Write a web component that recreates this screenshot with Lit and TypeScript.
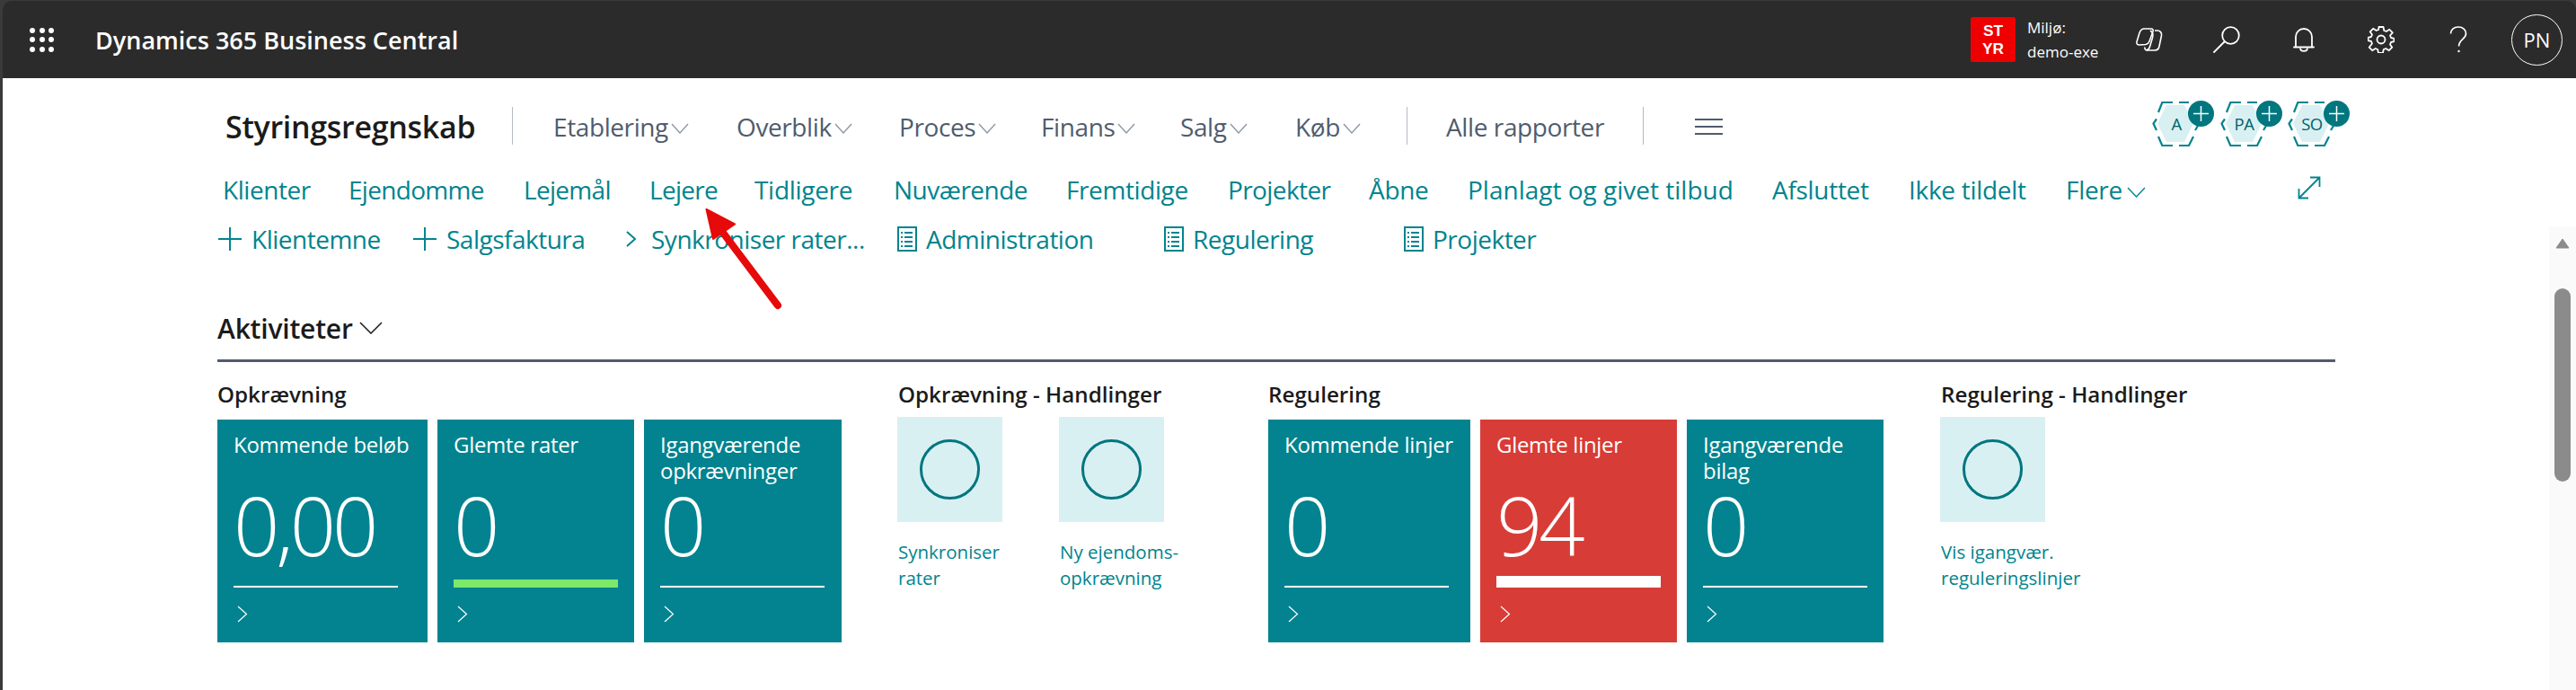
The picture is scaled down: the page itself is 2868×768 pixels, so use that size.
import { LitElement, html, css } from "lit";
import { customElement } from "lit/decorators.js";

const chevDown = (w = 20) => html`<svg class="chev" width=${w} height="12" viewBox="0 0 20 12" preserveAspectRatio="none"><path d="M1 1l9 10 9-10" fill="none" stroke="currentColor" stroke-width="1.3"/></svg>`;

const topNav = [
  { t: "Etablering", w: 204 },
  { t: "Overblik", w: 181 },
  { t: "Proces", w: 158 },
  { t: "Finans", w: 155 },
  { t: "Salg", w: 128 },
  { t: "Køb", w: 124 },
];
const links = [
  { t: "Klienter", w: 140, ls: -0.45 }, { t: "Ejendomme", w: 195, ls: -0.7 }, { t: "Lejemål", w: 140, ls: -0.7 }, { t: "Lejere", w: 117, ls: -0.7 },
  { t: "Tidligere", w: 155, ls: -0.3 }, { t: "Nuværende", w: 192, ls: -0.5 }, { t: "Fremtidige", w: 180, ls: -0.4 }, { t: "Projekter", w: 157, ls: -0.6 },
  { t: "Åbne", w: 110, ls: -0.3 }, { t: "Planlagt og givet tilbud", w: 339, ls: 0 }, { t: "Afsluttet", w: 152, ls: -0.3 }, { t: "Ikke tildelt", w: 175, ls: -0.3 },
];

const plus = html`<svg class="ic" width="28" height="28" viewBox="0 0 28 28"><path d="M14 1v26M1 14h26" fill="none" stroke="currentColor" stroke-width="2"/></svg>`;
const report = html`<svg class="ic" width="22" height="28" viewBox="0 0 22 28" fill="none" stroke="currentColor" stroke-width="2"><path d="M1 1h20v26H1z"/><path d="M8 7h9M8 12h9M8 17h9M8 22h9M4 7h2M4 12h2M4 17h2M4 22h2"/></svg>`;

type Tile = { label: string; value: string; w: number; bar?: "green" | "white"; red?: boolean };
const tile = (x: Tile) => html`
  <div class="tile ${x.red ? "red" : ""}" style="width:${x.w}px">
    <div class="tile-label">${x.label}</div>
    <div class="tile-value">${x.value}</div>
    <div class="tile-bar ${x.bar ?? ""}"></div>
    <svg class="tile-chev" width="12" height="19" viewBox="0 0 12 19"><path d="M1 1l9.500 8.500L1 18" fill="none" stroke="currentColor" stroke-width="1.2"/></svg>
  </div>`;
const action = (l1: string, l2: string) => html`
  <div class="action">
    <div class="action-box"><div class="ring"></div></div>
    <div class="action-label">${l1}<br />${l2}</div>
  </div>`;

const hex = (t: string) => html`
  <div class="hex">
    <svg width="56" height="52" viewBox="0 0 56 52">
      <path d="M6 25.500 L16 5 H36 L46 25.500 L36 46 H16 Z" fill="#d9f0f2"/>
      <path d="M5 20.500 L1.500 25.500 L5 33 M7 40 L11.300 50 H23 M30 50 H41 L46 40 M48 33 L51 28 M7 13 L11.300 2 H23 M30 2 H41" fill="none" stroke="#00848e" stroke-width="2.200"/>
    </svg>
    <span class="hex-t">${t}</span>
    <span class="hex-plus"><svg width="17" height="17" viewBox="0 0 17 17"><path d="M8.500 0v17M0 8.500h17" stroke="#fff" stroke-width="1.500"/></svg></span>
  </div>`;

@customElement("app-root")
export class AppRoot extends LitElement {
  static styles = css`
    :host { display: block; width: 2868px; height: 768px; overflow: hidden; position: relative; background: #fff;
      font-family: "Open Sans", "Noto Sans", sans-serif; }
    .frame { height: 768px; display: flex; flex-direction: column; background: #3a3a3a; }
    .topbar { height: 86px; margin: 1px 0 0 3px; border-radius: 10px 10px 0 0; background: #2b2b2b; flex: none; display: flex; align-items: center; color: #fff; padding-left: 30px; box-sizing: border-box; }
    .waffle { display: grid; grid-template-columns: repeat(3, 6px); gap: 4.500px 4.500px; width: 27px; margin-right: 46px; }
    .waffle i { width: 6px; height: 6px; border-radius: 50%; background: #fff; }
    .product { font-size: 27px; font-weight: 600; white-space: nowrap; margin-right: auto; }
    .env { width: 50px; height: 50px; background: #ee0000; border-radius: 2px; display: flex; flex-direction: column; align-items: center; justify-content: center;
      font-family: "Liberation Sans", sans-serif; font-size: 17.300px; font-weight: 700; line-height: 20px; margin-right: 13px; flex: none; }
    .env span { display: block; height: 20px; }
    .env-text { width: 93px; font-size: 17px; line-height: 27px; flex: none; white-space: nowrap; }
    .tb-ic { display: flex; align-items: center; justify-content: center; width: 86px; height: 86px; flex: none; }
    .avatar { width: 57px; height: 57px; border: 1.500px solid #fff; box-sizing: border-box; border-radius: 50%; display: flex; align-items: center; justify-content: center; font-size: 22px; margin: 0 15px 0 16px; flex: none; }

    .page { flex: 1; background: #fff; margin-left: 3px; position: relative; display: flex; flex-direction: column; padding-left: 239px; box-sizing: border-box; }
    .head { height: 74px; margin-top: 16px; display: flex; align-items: center; flex: none; }
    .title { font-size: 34px; font-weight: 600; color: #1b1b1b; letter-spacing: -0.3px; width: 328px; padding-left: 9px; box-sizing: border-box; white-space: nowrap; margin-top: 2px; }
    .sep { width: 1px; height: 42px; background: #b4bac2; flex: none; }
    .menu { display: flex; align-items: center; padding-left: 45px; color: #505c6d; font-size: 28px; letter-spacing: -0.4px; margin-top: 2px; }
    .menu .m { display: flex; align-items: center; white-space: nowrap; gap: 3px; box-sizing: border-box; }
    .m .chev { color: #8b95a3; margin-top: 4px; }
    .all { font-size: 28px; color: #505c6d; letter-spacing: -0.4px; width: 262px; padding-left: 43px; box-sizing: border-box; white-space: nowrap; margin-top: 2px; }
    .burger { margin: 2px 0 0 57px; display: flex; flex-direction: column; gap: 5.500px; width: 31px; }
    .burger i { height: 2.500px; background: #505c6d; display: block; }
    .hexes { position: absolute; left: 2393px; top: 25px; display: flex; gap: 19.500px; }
    .hex { width: 56px; height: 52px; position: relative; }
    .hex svg { display: block; }
    .hex-t { position: absolute; left: 0; width: 54px; top: 13px; text-align: center; font-size: 18.500px; line-height: 25px; color: #00626b; letter-spacing: -0.5px; }
    .hex-plus { position: absolute; left: 40px; top: 0; width: 29px; height: 29px; border-radius: 50%; background: #00767f; display: flex; align-items: center; justify-content: center; }

    .links { display: flex; height: 50px; align-items: center; margin-top: 9px; padding-left: 6px; color: #00848e; font-size: 28px; letter-spacing: -0.3px; white-space: nowrap; flex: none; }
    .flere { display: flex; align-items: center; gap: 5px; }
    .flere .chev { margin-top: 6px; }
    .expand { margin-left: 169px; margin-top: -4px; }
    .actions { display: flex; align-items: center; height: 32px; margin-top: 14px; color: #00848e; font-size: 28px; letter-spacing: -0.5px; white-space: nowrap; flex: none; }
    .act { display: flex; align-items: center; gap: 10px; }
    .act .ic { flex: none; }
    .act .cv { flex: none; margin-right: 5px; }

    .section { margin-top: 63px; display: flex; align-items: center; gap: 7px; font-size: 30px; font-weight: 600; color: #1b1b1b; letter-spacing: -0.2px; height: 40px; flex: none; }
    .rule { width: 2358px; height: 3px; background: #505c6d; margin-top: 15px; flex: none; }
    .cols { display: flex; margin-top: 20px; }
    .col h3 { margin: 0; font-size: 24.200px; line-height: 32px; font-weight: 600; color: #1b1b1b; white-space: nowrap; height: 32px; }
    .col.act-col h3 { padding-left: 1px; }
    .tiles { display: flex; gap: 11px; margin-top: 12px; }
    .tile { height: 248px; background: #02838f; color: #fff; box-sizing: border-box; padding: 13px 18px 0; position: relative; }
    .tile.red { background: #d83c36; }
    .tile-label { font-size: 24px; line-height: 29px; height: 58px; letter-spacing: -0.3px; }
    .tile-value { font-size: 90px; line-height: 92px; font-weight: 300; height: 85px; letter-spacing: -4px; }
    .tile-bar { position: absolute; left: 18px; width: 183px; bottom: 61px; height: 2px; background: #fff; }
    .tile-bar.green { height: 9px; background: #7de96b; }
    .tile-bar.white { height: 13px; }
    .tile-chev { position: absolute; left: 22px; bottom: 22px; }
    .acts { display: flex; gap: 63px; margin-top: 9px; }
    .action { width: 117px; }
    .action-box { width: 117px; height: 117px; background: #d9f0f2; display: flex; align-items: center; justify-content: center; }
    .ring { width: 67px; height: 67px; box-sizing: border-box; border: 3.500px solid #00767f; border-radius: 50%; }
    .action-label { margin-top: 19px; padding-left: 1px; font-size: 20.500px; line-height: 29px; color: #00848e; white-space: nowrap; }

    .sb { position: absolute; right: 0; top: 165px; bottom: 0; width: 30px; background: #fafafa; }
    .sb-arrow { position: absolute; left: 7px; top: 13px; }
    .sb-thumb { position: absolute; left: 6px; top: 69px; width: 18px; height: 215px; border-radius: 9px; background: #8b8b8b; }
    .arrow { position: absolute; left: 770px; top: 220px; pointer-events: none; }
  `;

  render() {
    const waffle = Array.from({ length: 9 }, () => html`<i></i>`);
    return html`
      <div class="frame">
        <div class="topbar">
          <div class="waffle">${waffle}</div>
          <div class="product">Dynamics 365 Business Central</div>
          <div class="env"><span>ST</span><span>YR</span></div>
          <div class="env-text">Miljø:<br />demo-exe</div>
          <div class="tb-ic">
            <svg width="30" height="26" viewBox="0 0 30 26" fill="none" stroke="#fff" stroke-width="1.600" stroke-linejoin="round"><path d="M9 1h8c2 0 2.500 1.500 2 3l-4 11c-.700 2-2 3-4 3.500L4 19c-2 .300-3.500-1-3-3.500l3-10C5 3 6.500 1 9 1z"/><path d="M21 3h3c3 0 5 2.500 4.500 5.500l-2.500 12c-.500 3-2.500 4.500-5 4.500h-8c-2.500 0-3.500-1.500-3-3.500"/><path d="M16 3c3 2 3.500 5 2.500 8l-3 10c-.500 2-2 3.500-4 4"/></svg>
          </div>
          <div class="tb-ic">
            <svg width="30" height="30" viewBox="0 0 30 30" fill="none" stroke="#fff" stroke-width="1.800"><circle cx="19.500" cy="10.500" r="9.300"/><path d="M12.500 17.500L1 29" stroke-linecap="round"/></svg>
          </div>
          <div class="tb-ic">
            <svg width="24" height="27" viewBox="0 0 24 27" fill="none" stroke="#fff" stroke-width="1.800"><path d="M3 21.500V10a9 9 0 0 1 18 0v11.500"/><path d="M1 21.500h22" stroke-linecap="round"/><path d="M8 22.500c0 4.500 8 4.500 8 0" /></svg>
          </div>
          <div class="tb-ic">
            <svg width="30" height="30" viewBox="0 0 30 30" fill="none" stroke="#fff" stroke-width="1.800"><circle cx="15" cy="15" r="4.500"/><path d="M12.500 1h5l.800 4 2.500 1 3.500-2.200 3.500 3.500L25 10.500l1 2.500 3.500.800v3.400l-3.500.800-1 2.500 2.300 3.200-3.500 3.500-3.500-2.200-2.500 1-.800 3.900h-5l-.800-3.900-2.500-1-3.500 2.200-3.500-3.500L5 19.500 4 17l-3.500-.800v-3.400L4 12l1-2.500-2.300-3.200 3.500-3.500 3.500 2.200 2.500-1z" stroke-linejoin="round"/></svg>
          </div>
          <div class="tb-ic">
            <svg width="20" height="30" viewBox="0 0 20 30" fill="none" stroke="#fff" stroke-width="1.700"><path d="M1.500 8.500C1.500 4 5 1 10 1s8.500 3 8.500 7.500c0 6-8 6.500-8 14"/><circle cx="10.500" cy="28" r="1.200" fill="#fff" stroke="none"/></svg>
          </div>
          <div class="avatar">PN</div>
        </div>
        <div class="page">
          <div class="head">
            <div class="title">Styringsregnskab</div>
            <div class="sep"></div>
            <div class="menu">
              ${topNav.map((m) => html`<div class="m" style="width:${m.w}px"><span>${m.t}</span>${chevDown()}</div>`)}
            </div>
            <div class="sep"></div>
            <div class="all">Alle rapporter</div>
            <div class="sep"></div>
            <div class="burger"><i></i><i></i><i></i></div>
          </div>
          <div class="hexes">${hex("A")}${hex("PA")}${hex("SO")}</div>
          <div class="links">
            ${links.map((l) => html`<div style="width:${l.w}px;letter-spacing:${l.ls}px">${l.t}</div>`)}
            <div class="flere">Flere ${chevDown(21)}</div>
            <svg class="expand" width="26" height="26" viewBox="0 0 26 26" fill="none" stroke="currentColor" stroke-width="1.800"><path d="M1.500 24.500L24.500 1.500M14 1.500h10.500V12M1.500 14v10.500H12"/></svg>
          </div>
          <div class="actions">
            <div class="act" style="width:217px">${plus}<span>Klientemne</span></div>
            <div class="act" style="width:237px">${plus}<span>Salgsfaktura</span></div>
            <div class="act" style="width:303px"><svg class="cv" width="14" height="18" viewBox="0 0 14 18"><path d="M2 1l9 8-9 8" fill="none" stroke="currentColor" stroke-width="2"/></svg><span>Synkroniser rater...</span></div>
            <div class="act" style="width:297px">${report}<span>Administration</span></div>
            <div class="act" style="width:267px">${report}<span>Regulering</span></div>
            <div class="act">${report}<span>Projekter</span></div>
          </div>
          <div class="section">Aktiviteter <svg width="26" height="14" viewBox="0 0 26 14"><path d="M1 1l12 12L25 1" fill="none" stroke="#1b1b1b" stroke-width="1.500"/></svg></div>
          <div class="rule"></div>
          <div class="cols">
            <div class="col" style="width:757px">
              <h3>Opkrævning</h3>
              <div class="tiles">
                ${tile({ label: "Kommende beløb", value: "0,00", w: 234 })}
                ${tile({ label: "Glemte rater", value: "0", w: 219, bar: "green" })}
                ${tile({ label: "Igangværende opkrævninger", value: "0", w: 220 })}
              </div>
            </div>
            <div class="col act-col" style="width:413px">
              <h3>Opkrævning - Handlinger</h3>
              <div class="acts">${action("Synkroniser", "rater")}${action("Ny ejendoms-", "opkrævning")}</div>
            </div>
            <div class="col" style="width:748px">
              <h3>Regulering</h3>
              <div class="tiles">
                ${tile({ label: "Kommende linjer", value: "0", w: 225 })}
                ${tile({ label: "Glemte linjer", value: "94", w: 219, bar: "white", red: true })}
                ${tile({ label: "Igangværende bilag", value: "0", w: 219 })}
              </div>
            </div>
            <div class="col act-col">
              <h3>Regulering - Handlinger</h3>
              <div class="acts">${action("Vis igangvær.", "reguleringslinjer")}</div>
            </div>
          </div>
          <div class="sb">
            <svg class="sb-arrow" width="16" height="12" viewBox="0 0 16 12"><path d="M8 1l7 10H1z" fill="#8b8b8b" stroke="#8b8b8b" stroke-linejoin="round"/></svg>
            <div class="sb-thumb"></div>
          </div>
        </div>
      </div>
      <svg class="arrow" width="110" height="130" viewBox="770 220 110 130">
        <path d="M786.500 233L818 249.500L794 266Z" fill="#e60a0a" stroke="#e60a0a" stroke-width="2" stroke-linejoin="round"/>
        <path d="M802 255L866 340" fill="none" stroke="#e60a0a" stroke-width="8" stroke-linecap="round"/>
      </svg>
    `;
  }
}
